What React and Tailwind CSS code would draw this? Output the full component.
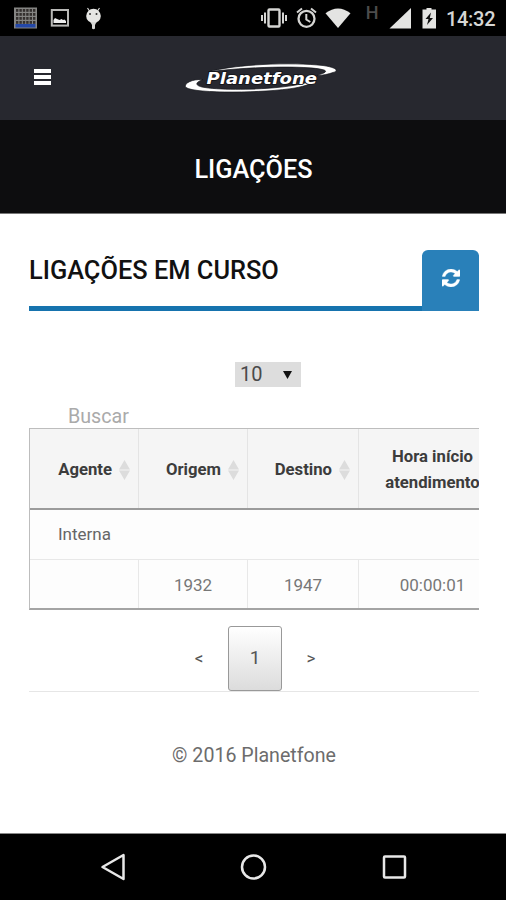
import React from "react";

function StatusBar() {
  return (
    <div className="h-9 shrink-0 bg-black">
      <svg width="506" height="36" viewBox="0 0 506 36" fill="none">
        <rect x="14" y="7.500" width="23" height="21" fill="#858583" />
        <rect x="15.500" y="24" width="20" height="3.500" fill="#2448a8" />
        <g fill="#34302e">
          {[9, 13, 17, 21].map((y) =>
            [16, 19.4, 22.8, 26.2, 29.6, 33].map((x) => (
              <rect key={x + "-" + y} x={x} y={y} width="2.400" height="2.800" />
            ))
          )}
        </g>
        <rect x="51.800" y="10" width="16.200" height="15.600" stroke="#b9b9b7" strokeWidth="2" />
        <path d="M53.500 23V20L55 18l2 1 2.500 1 2-1 1.500 1 1.500-.5 1.500 1.500V23z" fill="#eee" />
        <path d="M87.500 8l2 3M99.500 8l-2 3" stroke="#d8d8d6" strokeWidth="1.200" />
        <ellipse cx="93.500" cy="16" rx="7.300" ry="7.200" fill="#e6e6e4" />
        <path d="M90.500 22h6l-1.500 3v3.500q-1.500 1.500-3 0V25z" fill="#d8d8d6" />
        <circle cx="90" cy="14" r="1" fill="#333" />
        <circle cx="96.500" cy="14" r="1" fill="#333" />
        <g stroke="#d5d5d3" strokeWidth="2">
          <rect x="268.500" y="9.500" width="11" height="17" rx="1" strokeWidth="2.400" />
          <path d="M265 12.500v11M262 15v6M283 12.500v11M286 15v6" />
          <circle cx="306.500" cy="18.800" r="8" strokeWidth="2.300" />
          <path d="M306.300 14v5.500l4 2.500" />
          <path d="M297 12.500l5-4M316 12.500l-5-4" />
        </g>
        <path d="M325.500 13.300Q338 3.500 350.500 13.300L338 28z" fill="#e4e4e2" />
        <path d="M411 28.500V8L389.500 28.500z" fill="#e4e4e2" />
        <path d="M426.500 8h5v1.500h4.500v19H422.500v-19h4z" fill="#e4e4e2" />
        <path d="M431 12.500l-5.500 6.500h3l-1.500 6 6-7h-3.200z" fill="#111" />
        <text x="365.700" y="19.300" fontFamily="Roboto" fontWeight="500" fontSize="18" fill="#4c4c4c">H</text>
        <text x="446" y="26" fontFamily="Roboto" fontWeight="500" fontSize="20" textLength="49.500" fill="#d6d6d4">14:32</text>
      </svg>
    </div>
  );
}

function Logo() {
  return (
    <svg width="156" height="32" viewBox="183 61 156 32">
      <path d="M208 72C235 64 292 62 323 65.500C337 67.500 339 71 333 72.500C329 74 323 75.500 317 75.500C321 74 329 72 324 70C308 65 242 67 208 72Z" fill="#fff" stroke="#111318" strokeWidth=".7" />
      <path d="M203 79.500C190 79 183 84.500 186 87.500C195 94 266 93 295 88C306 86 314 83 317 79C309 83 293 86 277 87.500C251 90 217 90 202 87C194 85 196 82 203 79.500Z" fill="#fff" stroke="#111318" strokeWidth=".7" />
      <text x="206.500" y="84" textLength="110.500" lengthAdjust="spacingAndGlyphs" fontFamily="DejaVu Sans, sans-serif" fontWeight="700" fontStyle="italic" fontSize="16" fill="#fff" stroke="#101116" strokeWidth="1.500" paintOrder="stroke">Planetfone</text>
    </svg>
  );
}

function RefreshIcon() {
  return (
    <svg width="18" height="18" viewBox="0 0 1536 1536" fill="#fff" stroke="#fff" strokeWidth="30">
      <path d="M1511 928q0 5-1 7-64 268-268 434.500t-478 166.500q-146 0-282.500-55t-243.500-157l-129 129q-19 19-45 19t-45-19-19-45v-448q0-26 19-45t45-19h448q26 0 45 19t19 45-19 45l-137 137q71 66 161 102t187 36q134 0 250-65t186-179q11-17 53-117 8-23 30-23h192q13 0 22.500 9.500t9.500 22.500zm25-800v448q0 26-19 45t-45 19h-448q-26 0-45-19t-19-45 19-45l138-138q-148-137-349-137-134 0-250 65t-186 179q-11 17-53 117-8 23-30 23h-199q-13 0-22.500-9.500t-9.500-22.500v-7q65-268 270-434.500t480-166.500q146 0 284 55.500t245 156.500l130-129q19-19 45-19t45 19 19 45z" />
    </svg>
  );
}

function SortHeader({ label }) {
  return (
    <div className="flex items-center justify-end gap-[7px] border-r border-[#e4e4e4] pt-[2px] pr-[8px]">
      <span>{label}</span>
      <svg width="11" height="20" viewBox="0 0 11 20" fill="#dcdcdc">
        <path d="M5.500 0L11 9.500H0zM5.500 20L11 10.500H0z" />
      </svg>
    </div>
  );
}

export default function App() {
  return (
    <div className="flex h-[900px] w-[506px] flex-col overflow-hidden bg-white font-['Roboto',sans-serif]">
      <StatusBar />
      <header className="grid h-[84px] shrink-0 grid-cols-[183px_1fr] bg-[#27282f] pt-[25px]">
        <div className="pt-2 pl-[34px]">
          <div className="flex w-[17px] flex-col gap-[2px]">
            <div className="h-[4px] bg-white" />
            <div className="h-[4px] bg-white" />
            <div className="h-[4px] bg-white" />
          </div>
        </div>
        <Logo />
      </header>
      <div className="flex h-[94px] shrink-0 items-center justify-center border-b border-[#777] bg-[#0d0d0f] pt-[6px] pl-px text-[25.300px] font-medium text-white">
        <h1>LIGAÇÕES</h1>
      </div>
      <main className="flex grow flex-col pr-[27px] pl-[29px]">
        <div className="mt-[36px] flex h-[61px] items-start justify-between border-b-[5px] border-[#1673ae]">
          <h2 className="mt-[3px] text-[25.400px] leading-[35px] font-medium text-[#111]">LIGAÇÕES EM CURSO</h2>
          <button className="flex h-[61px] w-[57px] shrink-0 items-center justify-center rounded-t-md bg-[#2980b9] pb-[5px]">
            <RefreshIcon />
          </button>
        </div>
        <div className="mt-[51px] ml-[206px] flex h-[25px] w-[66px] items-center justify-between bg-[#dddddd] pr-[9px] pl-[5px] text-[20px] text-[#4a4a4a]">
          <span className="-mt-[2px]">10</span>
          <svg width="9" height="8" viewBox="0 0 9 8"><path d="M0 0h9L4.500 8z" fill="#111" /></svg>
        </div>
        <div className="mt-[17px] ml-[39px] h-[24px] text-[19.700px] leading-[25px] text-[#aaaaaa]">Buscar</div>
        <div className="h-[182px] shrink-0 overflow-hidden border-t border-b-2 border-l border-[#bdbdbd] border-b-[#a4a4a4] text-[17px] text-[#777]">
          <div className="grid h-[81px] w-[480px] grid-cols-[109px_109px_111px_150px] border-b-2 border-[#9b9b9b] bg-[#f5f5f5] text-[16.700px] font-bold text-[#3c3c3c]">
            <SortHeader label="Agente" />
            <SortHeader label="Origem" />
            <SortHeader label="Destino" />
            <div className="flex items-center justify-center pt-[2px] pr-[3px] text-center leading-[26px]">Hora início<br />atendimento</div>
          </div>
          <div className="flex h-[50px] items-center border-b border-[#e8e8e8] bg-[#fdfdfd] pt-px pl-[28px] text-[#666]">Interna</div>
          <div className="grid h-[49px] w-[480px] grid-cols-[109px_109px_111px_150px] bg-[#fdfdfd] text-center leading-[50px]">
            <div className="border-r border-[#e8e8e8]" />
            <div className="border-r border-[#e8e8e8]">1932</div>
            <div className="border-r border-[#e8e8e8]">1947</div>
            <div className="pr-[3px]">00:00:01</div>
          </div>
        </div>
        <div className="mt-[16px] flex h-[66px] shrink-0 justify-center border-b border-[#e6e6e6] pl-[2px] text-[17px] text-[#555]">
          <span className="w-[58px] text-center leading-[64px]">&lt;</span>
          <span className="h-[65px] w-[54px] rounded-[3px] border border-[#999] bg-linear-to-b from-white to-[#dcdcdc] text-center text-[19px] leading-[62px]">1</span>
          <span className="w-[58px] text-center leading-[64px]">&gt;</span>
        </div>
        <footer className="mt-[51px] text-center text-[19.600px] leading-[26px] text-[#6c6c6c]">© 2016 Planetfone</footer>
      </main>
      <nav className="h-[67px] shrink-0 border-t border-[#888] bg-black">
        <svg width="506" height="66" viewBox="0 834 506 66" fill="none" stroke="#e8e8e8" strokeWidth="2.500" strokeLinejoin="round">
          <path d="M102.500 867L123.500 855V879z" />
          <circle cx="253.500" cy="867" r="11.500" />
          <rect x="384" y="856.500" width="21" height="21" rx="1" />
        </svg>
      </nav>
    </div>
  );
}
